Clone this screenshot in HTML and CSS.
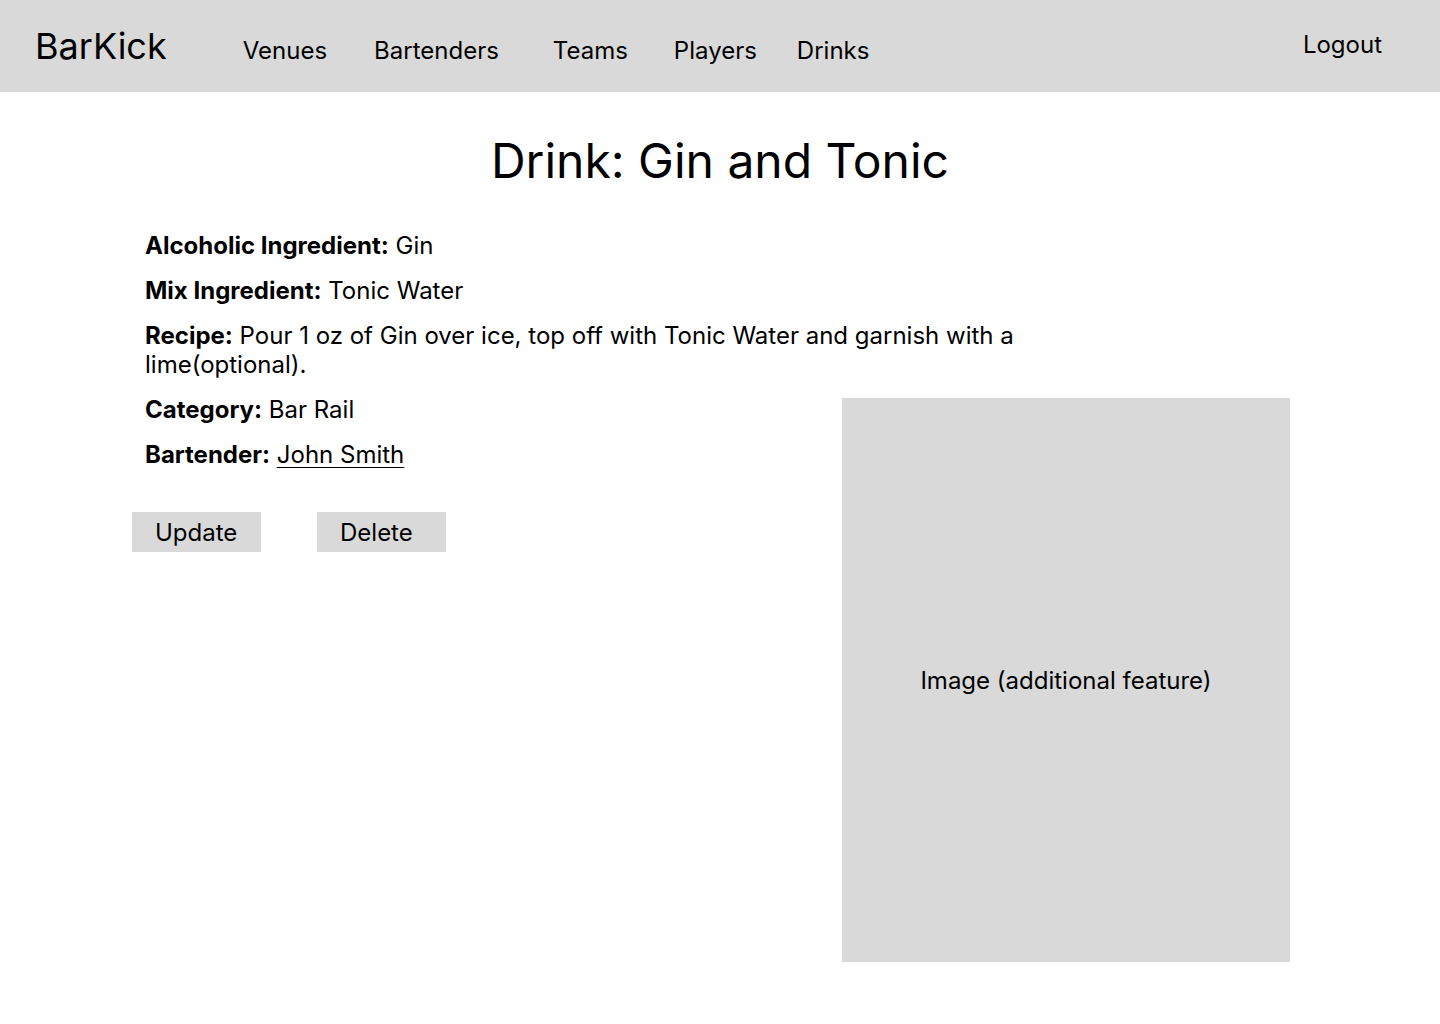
FILE: index.html
```html
<!DOCTYPE html>
<html lang="en">
<head>
    <meta charset="UTF-8">
    <meta name="viewport" content="width=device-width, initial-scale=1.0">
    <title>BarKick - Drink</title>
    <link rel="stylesheet" href="styles.css">
</head>
<body>

<header class="topbar">
    <div class="logo">BarKick</div>
    <nav class="nav">
        <a class="nav-link venues" href="#">Venues</a>
        <a class="nav-link bartenders" href="#">Bartenders</a>
        <a class="nav-link teams" href="#">Teams</a>
        <a class="nav-link players" href="#">Players</a>
        <a class="nav-link drinks" href="#">Drinks</a>
    </nav>
    <a class="logout" href="#">Logout</a>
</header>

<main class="content">
    <h1 class="title">Drink: Gin and Tonic</h1>

    <div class="details">
        <p class="field"><b>Alcoholic Ingredient:</b> Gin</p>
        <p class="field"><b>Mix Ingredient:</b> Tonic Water</p>
        <p class="field recipe"><b>Recipe:</b> Pour 1 oz of Gin over ice, top off with Tonic Water and garnish with a lime(optional).</p>

        <div class="row">
            <div class="left">
                <p class="field"><b>Category:</b> Bar Rail</p>
                <p class="field"><b>Bartender:</b> <a class="link" href="#">John Smith</a></p>

                <div class="actions">
                    <button class="btn">Update</button>
                    <button class="btn">Delete</button>
                </div>
            </div>

            <div class="image-box">Image (additional feature)</div>
        </div>
    </div>
</main>

</body>
</html>
```

FILE: styles.css
```css
body {
    margin: 0;
    font-family: Inter, "Noto Sans", sans-serif;
    color: #000;
    background-color: #fff;
}

a {
    color: #000;
    text-decoration: none;
}

/* barra superior */
.topbar {
    display: flex;
    align-items: flex-start;
    height: 92px;
    background-color: #d9d9d9;
    padding: 0 58px 0 35px;
}

.logo {
    font-size: 36px;
    line-height: 44px;
    margin-top: 24px;
}

.nav {
    display: flex;
    margin-top: 36px;
    margin-left: 76px;
}

.nav-link {
    font-size: 24px;
    line-height: 29px;
}

.bartenders { margin-left: 47px; }
.teams { margin-left: 54px; }
.players { margin-left: 46px; }
.drinks { margin-left: 40px; }

.logout {
    margin-left: auto;
    margin-top: 30px;
    font-size: 24px;
    line-height: 29px;
}

/* contenido */
.title {
    margin: 40px 0 0;
    font-size: 48px;
    line-height: 58px;
    font-weight: 400;
    text-align: center;
}

.details {
    padding: 41px 150px 0 132px;
}

.field {
    margin: 0 0 16px;
    padding-left: 13px;
    font-size: 24px;
    line-height: 29px;
}

.field b {
    font-weight: 700;
}

.recipe {
    max-width: 900px;
    margin-bottom: 11px;
}

.link {
    text-decoration: underline;
    text-underline-offset: 4px;
    text-decoration-thickness: 1px;
}

.row {
    display: flex;
    justify-content: space-between;
    align-items: flex-start;
}

.left {
    padding-top: 5px;
}

.actions {
    display: flex;
    gap: 56px;
    margin-top: 43px;
}

.btn {
    width: 129px;
    height: 40px;
    padding: 0 0 0 23px;
    text-align: left;
    border: none;
    border-radius: 0;
    background-color: #d9d9d9;
    font-family: inherit;
    font-size: 24px;
    line-height: 29px;
    color: #000;
    cursor: pointer;
}

.image-box {
    width: 448px;
    height: 564px;
    margin-top: 8px;
    display: flex;
    align-items: center;
    justify-content: center;
    background-color: #d9d9d9;
    font-size: 24px;
}
```
